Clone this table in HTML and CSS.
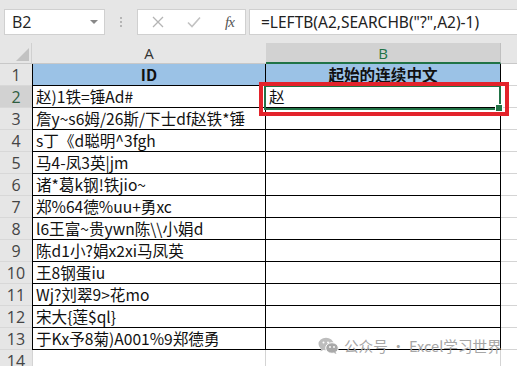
FILE: index.html
```html
<!DOCTYPE html>
<html>
<head>
<meta charset="utf-8">
<link rel="stylesheet" href="styles.css">
</head>
<body>
<div class="app">
  <div class="toolbar">
    <div class="namebox"><span class="nb-text">B2</span><span class="nb-arrow"></span></div>
    <div class="dots"><i></i><i></i><i></i></div>
    <div class="fbtns">
      <svg class="ic-x" width="12" height="12" viewBox="0 0 12 12"><path d="M1 1L11 11M11 1L1 11" stroke="#b4b4b4" stroke-width="1.3" fill="none"/></svg>
      <svg class="ic-ok" width="14" height="12" viewBox="0 0 14 12"><path d="M1 6.5L5 10.5L13 1.5" stroke="#c2c2c2" stroke-width="1.6" fill="none"/></svg>
      <span class="fx">fx</span>
    </div>
    <div class="formula">=LEFTB(A2,SEARCHB("?",A2)-1)</div>
  </div>
  <div class="sheet">
    <div class="corner"><span class="tri"></span></div>
    <div class="ch">A</div>
    <div class="ch sel">B</div>
    <div class="ch rest"></div>

    <div class="rh">1</div><div class="c a hd">ID</div><div class="c b hd">起始的连续中文</div><div class="g"></div>
    <div class="rh rsel">2</div><div class="c a">赵)1铁=锤Ad#</div><div class="c b cur">赵<span class="green"><span class="handle"></span></span><span class="red"></span></div><div class="g"></div>
    <div class="rh">3</div><div class="c a">詹y~s6姆/26斯/下士df赵铁*锤</div><div class="c b"></div><div class="g"></div>
    <div class="rh">4</div><div class="c a">s丁《d聪明^3fgh</div><div class="c b"></div><div class="g"></div>
    <div class="rh">5</div><div class="c a">马4-凤3英|jm</div><div class="c b"></div><div class="g"></div>
    <div class="rh">6</div><div class="c a">诸*葛k钢!铁jio~</div><div class="c b"></div><div class="g"></div>
    <div class="rh">7</div><div class="c a">郑%64德%uu+勇xc</div><div class="c b"></div><div class="g"></div>
    <div class="rh">8</div><div class="c a">l6王富~贵ywn陈\\小娟d</div><div class="c b"></div><div class="g"></div>
    <div class="rh">9</div><div class="c a">陈d1小?娟x2xi马凤英</div><div class="c b"></div><div class="g"></div>
    <div class="rh">10</div><div class="c a">王8钢蛋iu</div><div class="c b"></div><div class="g"></div>
    <div class="rh">11</div><div class="c a">Wj?刘翠9&gt;花mo</div><div class="c b"></div><div class="g"></div>
    <div class="rh">12</div><div class="c a">宋大{莲$ql}</div><div class="c b"></div><div class="g"></div>
    <div class="rh">13</div><div class="c a">于Kx予8菊)A001%9郑德勇</div><div class="c b"></div><div class="g"></div>
    <div class="rh">14</div><div class="e a"></div><div class="e"></div><div class="g"></div>
  </div>
  <div class="wm">
    <svg width="21" height="17" viewBox="0 0 21 17"><ellipse cx="8" cy="7" rx="7.5" ry="6.3" fill="#bdbdbd"/><path d="M3 11.5L2.5 14.5L6 12.5Z" fill="#bdbdbd"/><ellipse cx="14" cy="11" rx="6.3" ry="5.3" fill="#a9a9a9" stroke="#fff" stroke-width="1"/><path d="M17.5 15L18.5 17L15.5 15.8Z" fill="#a9a9a9"/><circle cx="5.5" cy="5.5" r="1" fill="#fff"/><circle cx="10" cy="5.5" r="1" fill="#fff"/><circle cx="12" cy="10" r="0.9" fill="#fff"/><circle cx="16" cy="10" r="0.9" fill="#fff"/></svg>
    <span>公众号 · Excel学习世界</span>
  </div>
</div>
</body>
</html>
```
FILE: styles.css
```css
html, body { margin: 0; padding: 0; }
body { width: 517px; height: 366px; overflow: hidden; background: #e6e6e6; }
.app { position: relative; width: 517px; height: 366px; }

.toolbar { height: 43px; display: flex; align-items: flex-start; padding-top: 9px; box-sizing: border-box; }
.namebox { margin-left: 4px; width: 101px; height: 26px; background: #fff; border: 1px solid #d0d0d0; box-sizing: border-box; display: flex; align-items: center; justify-content: space-between; padding: 0 6px 0 7px; }
.nb-text { font-family: "Open Sans", "Noto Sans", sans-serif; font-size: 16px; color: #222; }
.nb-arrow { width: 0; height: 0; border-left: 4px solid transparent; border-right: 4px solid transparent; border-top: 4px solid #888; }
.dots { width: 32px; height: 26px; display: flex; flex-direction: column; align-items: center; justify-content: center; gap: 2px; }
.dots i { display: block; width: 2px; height: 2px; background: #b5b5b5; }
.fbtns { width: 109px; height: 26px; background: #fff; border: 1px solid #d0d0d0; box-sizing: border-box; display: flex; align-items: center; padding-left: 14px; }
.ic-x { margin-right: 23px; }
.ic-ok { margin-right: 24px; }
.fx { font-family: "Liberation Serif", serif; font-style: italic; font-size: 15px; color: #555; letter-spacing: -1px; }
.formula { margin-left: 3px; flex: 1; height: 26px; background: #fff; border: 1px solid #d0d0d0; border-right: none; box-sizing: border-box; font-family: "Noto Sans", sans-serif; font-size: 15.5px; color: #222; padding-left: 11px; line-height: 24px; white-space: nowrap; }

.sheet { display: grid; grid-template-columns: 32px 234px 235px 1fr; grid-template-rows: 21px; grid-auto-rows: 22px; background: #fff; }
.corner { background: #e6e6e6; border-bottom: 1px solid #c8c8c8; border-right: 1px solid #d0d0d0; position: relative; box-sizing: border-box; }
.tri { position: absolute; right: 2px; bottom: 2px; width: 0; height: 0; border-left: 13px solid transparent; border-bottom: 13px solid #c2c2c2; }
.ch { background: #e6e6e6; border-bottom: 1px solid #c8c8c8; box-sizing: border-box; font-family: "Open Sans", "Noto Sans", sans-serif; font-size: 15px; color: #333; display: flex; align-items: center; justify-content: center; line-height: 1; padding-top: 1px; }
.ch.sel { background: #d2d2d2; color: #217346; border-bottom: 2px solid #217346; border-right: 1px solid #c0c0c0; }
.ch.rest { background: #e6e6e6; }

.rh { background: #e6e6e6; border-bottom: 1px solid #d8d8d8; box-sizing: border-box; font-family: "Open Sans", "Noto Sans", sans-serif; font-size: 16px; color: #444; display: flex; align-items: center; justify-content: center; }
.rh.rsel { background: #d2d2d2; color: #2f5d40; }

.c { border-bottom: 1px solid #000; border-right: 1px solid #000; box-sizing: border-box; font-family: "Noto Sans CJK SC", sans-serif; font-size: 15.6px; color: #111; display: flex; align-items: center; padding-left: 3px; white-space: nowrap; line-height: 1; }
.c.a { border-left: 1px solid #000; }
.c.hd { background: #9bc2e6; justify-content: center; font-weight: bold; padding-left: 0; }
.e { border-bottom: 1px solid #d4d4d4; border-right: 1px solid #d4d4d4; box-sizing: border-box; }
.e.a { border-left: 1px solid #d4d4d4; }
.g { border-bottom: 1px solid #d4d4d4; box-sizing: border-box; }

.cur { position: relative; }
.green { position: absolute; left: -2px; top: -1px; width: 237px; height: 25px; border: 2px solid #217346; box-sizing: border-box; }
.handle { position: absolute; right: -4px; bottom: -4px; width: 6px; height: 6px; background: #217346; border: 1px solid #fff; }
.red { position: absolute; left: -7px; top: -4px; width: 250px; height: 34px; border: 4px solid #e3232b; box-sizing: border-box; }

.wm { position: absolute; left: 318px; top: 335px; display: flex; align-items: center; gap: 5px; font-family: "Noto Sans CJK SC", sans-serif; font-size: 14.6px; color: #a6a6a6; white-space: nowrap; }
```
